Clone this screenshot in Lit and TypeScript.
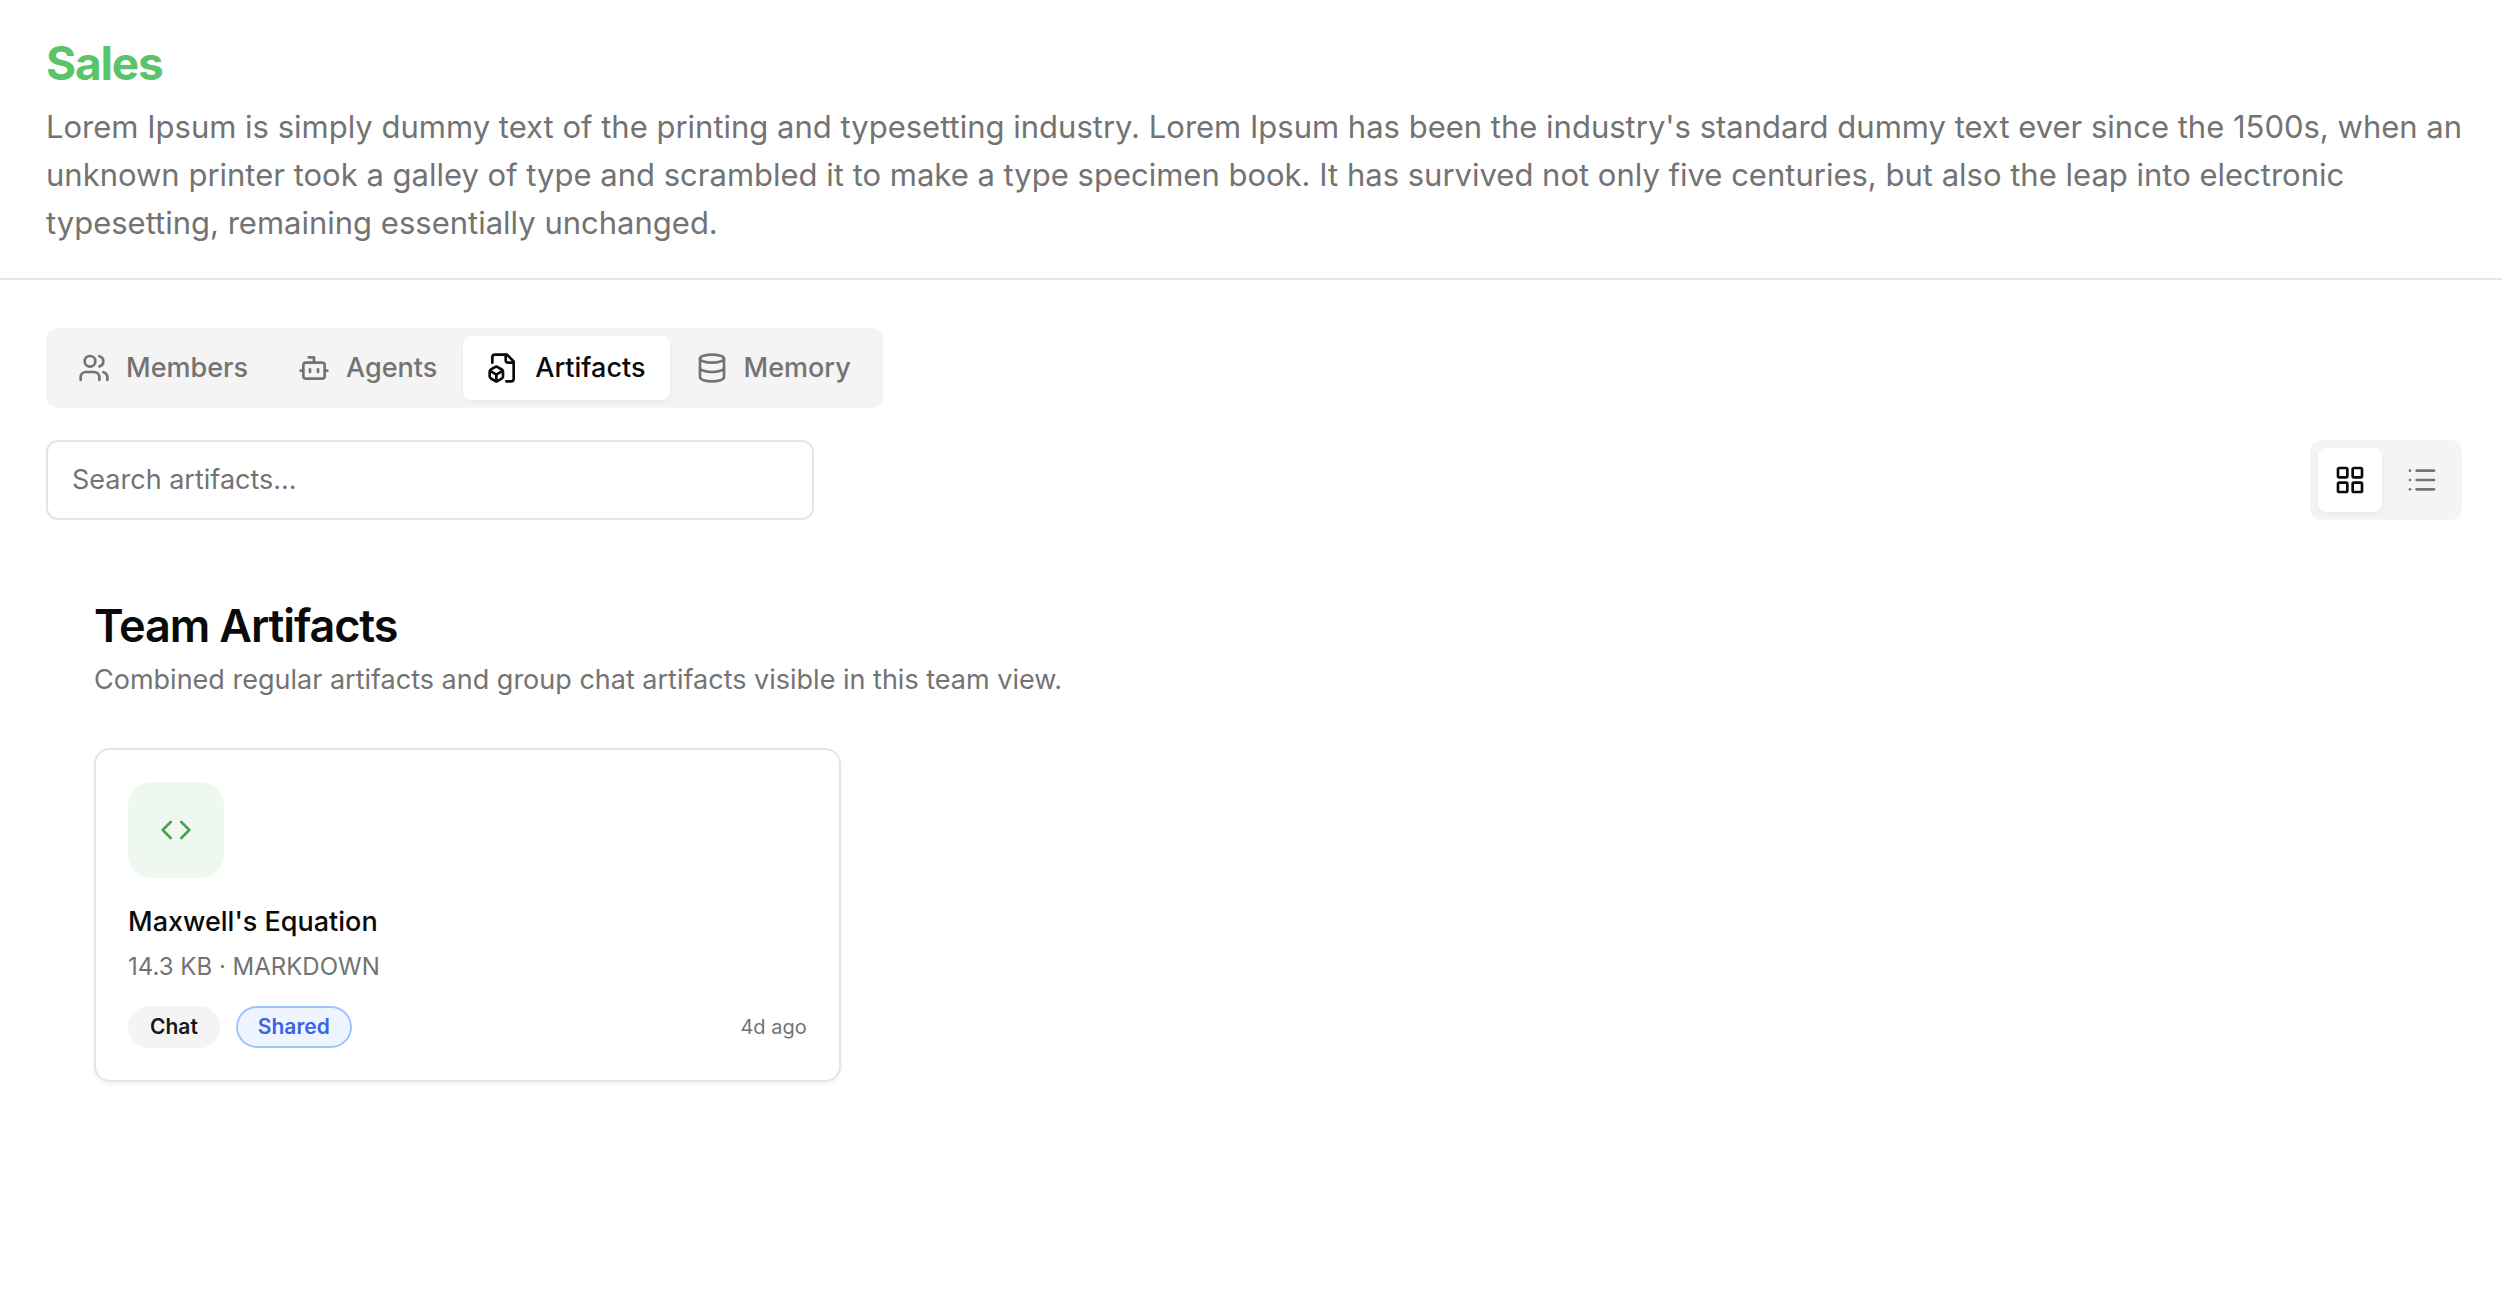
import { LitElement, html, css, svg, nothing } from "lit";
import { customElement, property, state } from "lit/decorators.js";
import { classMap } from "lit/directives/class-map.js";

type IconName = "users" | "bot" | "fileBox" | "database" | "grid" | "list" | "code";

const ICONS = {
  users: svg`<path d="M16 21v-2a4 4 0 0 0-4-4H6a4 4 0 0 0-4 4v2"/><circle cx="9" cy="7" r="4"/><path d="M22 21v-2a4 4 0 0 0-3-3.87"/><path d="M16 3.13a4 4 0 0 1 0 7.75"/>`,
  bot: svg`<path d="M12 8V4H8"/><rect width="16" height="12" x="4" y="8" rx="2"/><path d="M2 14h2"/><path d="M20 14h2"/><path d="M15 13v2"/><path d="M9 13v2"/>`,
  fileBox: svg`<path d="M14.5 22H18a2 2 0 0 0 2-2V7l-5-5H6a2 2 0 0 0-2 2v4"/><path d="M14 2v4a2 2 0 0 0 2 2h4"/><path d="M3 13.1a2 2 0 0 0-1 1.76v3.24a2 2 0 0 0 .97 1.78L6 21.7a2 2 0 0 0 2.03.01L11 19.9a2 2 0 0 0 1-1.76V14.9a2 2 0 0 0-.97-1.78L8 11.3a2 2 0 0 0-2.03-.01Z"/><path d="M7 17v5"/><path d="M11.7 14.2 7 17l-4.7-2.8"/>`,
  database: svg`<ellipse cx="12" cy="5" rx="9" ry="3"/><path d="M3 5V19A9 3 0 0 0 21 19V5"/><path d="M3 12A9 3 0 0 0 21 12"/>`,
  grid: svg`<rect width="7" height="7" x="3" y="3" rx="1"/><rect width="7" height="7" x="14" y="3" rx="1"/><rect width="7" height="7" x="14" y="14" rx="1"/><rect width="7" height="7" x="3" y="14" rx="1"/>`,
  list: svg`<path d="M3 5h.01"/><path d="M3 12h.01"/><path d="M3 19h.01"/><path d="M8 5h13"/><path d="M8 12h13"/><path d="M8 19h13"/>`,
  code: svg`<path d="m16 18 6-6-6-6"/><path d="m8 6-6 6 6 6"/>`,
};

@customElement("ui-icon")
export class UiIcon extends LitElement {
  static styles = css`
    :host {
      display: block;
      flex: none;
      width: 32px;
      height: 32px;
    }
    .icon {
      display: block;
      width: 100%;
      height: 100%;
      fill: none;
      stroke: currentColor;
      stroke-width: 2;
      stroke-linecap: round;
      stroke-linejoin: round;
    }
  `;

  @property() name: IconName = "users";

  render() {
    return html`<svg class="icon" viewBox="0 0 24 24" aria-hidden="true">${ICONS[this.name]}</svg>`;
  }
}

interface Artifact {
  title: string;
  size: string;
  kind: string;
  source: string;
  shared: boolean;
  age: string;
}

@customElement("artifact-card")
export class ArtifactCard extends LitElement {
  static styles = css`
    :host {
      display: block;
    }
    .card {
      box-sizing: border-box;
      padding: 32px;
      border: 2px solid #e5e5e5;
      border-radius: 16px;
      background: #ffffff;
      box-shadow: 0 2px 4px rgba(0, 0, 0, 0.05);
    }
    .tile {
      display: flex;
      align-items: center;
      justify-content: center;
      width: 96px;
      height: 96px;
      border-radius: 24px;
      background: #eef8ef;
      color: #4aa254;
    }
    .title {
      margin: 24px 0 0;
      font-size: 27px;
      line-height: 40px;
      font-weight: 500;
      color: #0a0a0a;
    }
    .meta {
      margin: 8px 0 0;
      font-size: 24px;
      line-height: 34px;
      color: #737373;
    }
    .footer {
      display: flex;
      align-items: center;
      gap: 16px;
      margin-top: 22px;
      font-size: 20px;
      line-height: 30px;
    }
    .badge {
      padding: 4px 20px;
      border: 2px solid transparent;
      border-radius: 24px;
      background: #f4f4f4;
      color: #171717;
      font-size: 21px;
      font-weight: 600;
    }
    .badge.shared {
      border-color: #9cc5fb;
      background: #eff5ff;
      color: #3a63e6;
    }
    .age {
      margin-left: auto;
      color: #737373;
    }
  `;

  @property({ attribute: false }) artifact!: Artifact;

  render() {
    const a = this.artifact;
    return html`
      <article class="card">
        <div class="tile"><ui-icon name="code"></ui-icon></div>
        <h3 class="title">${a.title}</h3>
        <p class="meta">${a.size} · ${a.kind}</p>
        <div class="footer">
          <span class="badge">${a.source}</span>
          ${a.shared ? html`<span class="badge shared">Shared</span>` : nothing}
          <time class="age">${a.age}</time>
        </div>
      </article>
    `;
  }
}

const TABS: { label: string; icon: IconName }[] = [
  { label: "Members", icon: "users" },
  { label: "Agents", icon: "bot" },
  { label: "Artifacts", icon: "fileBox" },
  { label: "Memory", icon: "database" },
];

const VIEWS: { label: string; icon: IconName }[] = [
  { label: "Grid view", icon: "grid" },
  { label: "List view", icon: "list" },
];

const ARTIFACTS: Artifact[] = [
  {
    title: "Maxwell's Equation",
    size: "14.3 KB",
    kind: "MARKDOWN",
    source: "Chat",
    shared: true,
    age: "4d ago",
  },
];

@customElement("app-root")
export class AppRoot extends LitElement {
  static styles = css`
    :host {
      display: block;
      min-height: 100vh;
      background: #ffffff;
      color: #0a0a0a;
      font-family: Inter, "Liberation Sans", sans-serif;
    }
    .header {
      padding: 31px 32px 31px 46px;
      border-bottom: 2px solid #e5e5e5;
    }
    .name {
      margin: 0;
      font-size: 46px;
      line-height: 64px;
      font-weight: 700;
      letter-spacing: -0.025em;
      color: #5ac46a;
    }
    .about {
      margin: 8px 0 0;
      font-size: 31px;
      line-height: 48px;
      color: #737373;
    }
    .main {
      padding: 48px 40px 48px 46px;
    }
    .segments {
      display: flex;
      gap: 2px;
      box-sizing: border-box;
      width: fit-content;
      padding: 8px;
      border-radius: 12px;
      background: #f4f4f4;
    }
    .segments.views {
      gap: 8px;
    }
    .segment {
      display: flex;
      align-items: center;
      gap: 16px;
      margin: 0;
      padding: 12px 24px;
      border: 0;
      border-radius: 8px;
      background: transparent;
      color: #737373;
      font: inherit;
      font-size: 27px;
      line-height: 40px;
      font-weight: 500;
      cursor: pointer;
    }
    .segment.square {
      padding: 16px;
    }
    .segment.active {
      background: #ffffff;
      color: #0a0a0a;
      box-shadow: 0 2px 4px rgba(0, 0, 0, 0.05);
    }
    .toolbar {
      display: flex;
      align-items: center;
      justify-content: space-between;
      gap: 32px;
      margin-top: 32px;
    }
    .search {
      box-sizing: border-box;
      flex: 0 1 768px;
      min-width: 0;
      padding: 18px 24px;
      border: 2px solid #e5e5e5;
      border-radius: 12px;
      background: #ffffff;
      color: #0a0a0a;
      font: inherit;
      font-size: 27px;
      line-height: 40px;
    }
    .search::placeholder {
      color: #737373;
      opacity: 1;
    }
    .section {
      padding: 74px 48px 0;
    }
    .heading {
      margin: 0;
      font-size: 45px;
      line-height: 64px;
      font-weight: 600;
      letter-spacing: -0.025em;
    }
    .hint {
      margin: 2px 0 0;
      font-size: 27px;
      line-height: 40px;
      color: #737373;
    }
    .cards {
      display: grid;
      grid-template-columns: repeat(3, minmax(0, 1fr));
      gap: 40px;
      margin-top: 48px;
    }
  `;

  @state() private tab = "Artifacts";
  @state() private view = "Grid view";
  @state() private query = "";

  render() {
    const q = this.query.trim().toLowerCase();
    const shown = ARTIFACTS.filter((a) => a.title.toLowerCase().includes(q));
    return html`
      <header class="header">
        <h1 class="name">Sales</h1>
        <p class="about">
          Lorem Ipsum is simply dummy text of the printing and typesetting industry. Lorem Ipsum has
          been the industry's standard dummy text ever since the 1500s, when an unknown printer took
          a galley of type and scrambled it to make a type specimen book. It has survived not only
          five centuries, but also the leap into electronic typesetting, remaining essentially
          unchanged.
        </p>
      </header>
      <main class="main">
        <nav class="segments" role="tablist">
          ${TABS.map(
            (t) => html`<button
              class=${classMap({ segment: true, active: t.label === this.tab })}
              type="button"
              role="tab"
              aria-selected=${t.label === this.tab}
              @click=${() => (this.tab = t.label)}
            ><ui-icon name=${t.icon}></ui-icon>${t.label}</button>`,
          )}
        </nav>
        <div class="toolbar">
          <input
            class="search"
            type="text"
            aria-label="Search artifacts"
            placeholder="Search artifacts..."
            @input=${(e: Event) => (this.query = (e.target as HTMLInputElement).value)}
          />
          <div class="segments views">
            ${VIEWS.map(
              (v) => html`<button
                class=${classMap({ segment: true, square: true, active: v.label === this.view })}
                type="button"
                aria-label=${v.label}
                aria-pressed=${v.label === this.view}
                @click=${() => (this.view = v.label)}
              ><ui-icon name=${v.icon}></ui-icon></button>`,
            )}
          </div>
        </div>
        <section class="section">
          <h2 class="heading">Team Artifacts</h2>
          <p class="hint">Combined regular artifacts and group chat artifacts visible in this team view.</p>
          <div class="cards">
            ${shown.map((a) => html`<artifact-card .artifact=${a}></artifact-card>`)}
          </div>
        </section>
      </main>
    `;
  }
}
